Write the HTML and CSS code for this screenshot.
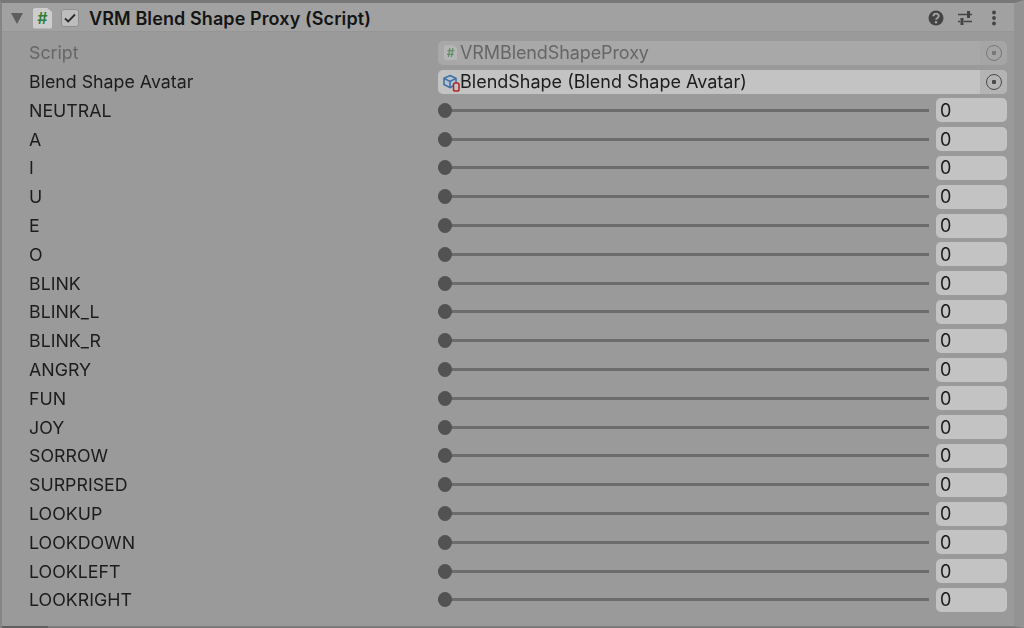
FILE: index.html
```html
<!DOCTYPE html>
<html lang="en">
<head>
    <meta charset="UTF-8">
    <title>VRM Blend Shape Proxy</title>
    <link rel="stylesheet" href="styles.css">
</head>
<body>
    <div class="inspector">
        <header class="header">
            <svg class="foldout" width="12" height="11" viewBox="0 0 12 11"><path d="M0 0h12L6 11z" fill="#5e5e5e"/></svg>
            <span class="script-icon">#</span>
            <span class="toggle">
                <svg width="14" height="12" viewBox="0 0 14 12"><path d="M2 6.5l3.2 3L12 2.5" fill="none" stroke="#2b2b2b" stroke-width="1.8"/></svg>
            </span>
            <h1 class="title">VRM Blend Shape Proxy (Script)</h1>
            <div class="tools">
                <svg width="16" height="16" viewBox="0 0 16 16"><circle cx="8" cy="8" r="7.5" fill="#444"/><path d="M5.4 6.2c0-3.4 5.3-3.4 5.3-.2 0 2-2.6 2-2.6 3.8" fill="none" stroke="#a3a3a3" stroke-width="1.9"/><circle cx="8" cy="12.2" r="1.2" fill="#a3a3a3"/></svg>
                <svg class="tool-sliders" width="16" height="16" viewBox="0 0 16 16"><path d="M1 4.5h9M13 4.5h2M1 11.5h2M7 11.5h8" stroke="#444" stroke-width="1.7"/><path d="M11.5 1v7M5 8v7" stroke="#444" stroke-width="3"/></svg>
                <svg class="tool-dots" width="6" height="16" viewBox="0 0 6 16"><circle cx="3" cy="2.5" r="1.9" fill="#444"/><circle cx="3" cy="8" r="1.9" fill="#444"/><circle cx="3" cy="13.5" r="1.9" fill="#444"/></svg>
            </div>
        </header>

        <div class="rows" id="rows">
            <div class="row">
                <span class="label label-off">Script</span>
                <div class="field field-off">
                    <span class="script-icon script-icon-small">#</span>
                    <span class="field-text">VRMBlendShapeProxy</span>
                    <span class="picker"><i></i></span>
                </div>
            </div>
            <div class="row">
                <span class="label">Blend Shape Avatar</span>
                <div class="field">
                    <svg class="asset-icon" width="17" height="18" viewBox="0 0 17 18">
                        <path d="M7 1.5l6 2.8v6.2L7 13.6 1 10.5V4.3z" fill="#b4c2cf" stroke="#3a6ea5" stroke-width="1.5"/>
                        <path d="M1 4.3l6 3.1 6-3.1M7 7.4v6.2" fill="none" stroke="#3a6ea5" stroke-width="1.5"/>
                        <rect x="10.5" y="9" width="5.5" height="8" rx="1.8" fill="#c3c3c3" stroke="#b02a2a" stroke-width="1.6"/>
                    </svg>
                    <span class="field-text">BlendShape (Blend Shape Avatar)</span>
                    <span class="picker"><i></i></span>
                </div>
            </div>
        </div>
        <div class="scroll-stub"></div>
    </div>

    <script>
        // one slider row per blend shape
        const names = ['NEUTRAL', 'A', 'I', 'U', 'E', 'O', 'BLINK', 'BLINK_L', 'BLINK_R', 'ANGRY',
            'FUN', 'JOY', 'SORROW', 'SURPRISED', 'LOOKUP', 'LOOKDOWN', 'LOOKLEFT', 'LOOKRIGHT'];
        const rows = document.getElementById('rows');
        names.forEach(function(name) {
            const row = document.createElement('div');
            row.className = 'row';
            row.innerHTML = '<span class="label">' + name + '</span>' +
                '<div class="slider"><div class="track"><span class="knob"></span></div>' +
                '<span class="number">0</span></div>';
            rows.appendChild(row);
        });
    </script>
</body>
</html>
```

FILE: styles.css
```css
* {
    margin: 0;
    padding: 0;
    box-sizing: border-box;
}

html, body {
    height: 100%;
    overflow: hidden;
}

body {
    font-family: Inter, 'Liberation Sans', sans-serif;
    background: #9a9a9a;
    color: #1c1c1c;
}

.inspector {
    position: relative;
    height: 628px;
    border-top: 3px solid #777;
    border-left: 2px solid #858585;
    border-right: 10px solid #939393;
    border-bottom: 2px solid #7c7c7c;
    filter: blur(0.45px);
}

.header {
    display: flex;
    align-items: center;
    height: 29px;
    padding-left: 9px;
    padding-top: 2px;
    background: #a1a1a1;
    border-bottom: 1px solid #969696;
}

.foldout {
    margin-right: 10px;
}

.script-icon {
    display: flex;
    align-items: center;
    justify-content: center;
    width: 19px;
    height: 21px;
    margin-right: 9px;
    background: #cdcdcd;
    clip-path: polygon(0 0, 72% 0, 100% 22%, 100% 100%, 0 100%);
    border-radius: 2px;
    color: #2f7d3a;
    font-size: 16px;
    font-weight: 600;
}

.toggle {
    display: flex;
    align-items: center;
    justify-content: center;
    width: 18px;
    height: 18px;
    margin-right: 10px;
    background: #bdbdbd;
    border: 1px solid #8e8e8e;
    border-radius: 3px;
}

.title {
    font-size: 18px;
    font-weight: 600;
    letter-spacing: 0.1px;
    color: #141414;
}

.tools {
    display: flex;
    align-items: center;
    margin-left: auto;
    margin-right: 17px;
}

.tool-sliders {
    margin: 0 18px 0 13px;
}

.rows {
    padding-top: 6.4px;
}

.row {
    display: flex;
    align-items: center;
    height: 28.8px;
    padding-left: 27px;
}

.label {
    width: 409px;
    font-size: 17.8px;
}

.label-off {
    color: #666;
}

.field {
    display: flex;
    align-items: center;
    width: 569px;
    height: 24px;
    background: #c3c3c3;
    border-radius: 5px;
    font-size: 18px;
}

.field-off {
    background: #a8a8a8;
    color: #666;
}

.script-icon-small {
    flex: none;
    width: 13px;
    height: 15px;
    margin: 0 3px 0 6px;
    background: #b6b6b6;
    color: #5f8f66;
    font-size: 12px;
}

.asset-icon {
    flex: none;
    margin: 2px 0 0 5px;
}

.field-text {
    flex: 1;
}

.field-off .field-text {
    letter-spacing: -0.1px;
}

.picker {
    display: flex;
    align-items: center;
    justify-content: center;
    width: 27px;
    height: 24px;
    background: #b4b4b4;
    border-radius: 0 5px 5px 0;
}

.field-off .picker {
    background: #a5a5a5;
}

.picker i {
    display: block;
    width: 16px;
    height: 16px;
    border: 1.5px solid #4a4a4a;
    border-radius: 50%;
    background: radial-gradient(circle, #4a4a4a 0 2px, transparent 2.5px);
}

.field-off .picker i {
    opacity: 0.5;
}

.slider {
    display: flex;
    align-items: center;
    width: 569px;
}

.track {
    position: relative;
    flex: 1;
    height: 3px;
    margin-right: 7px;
    background: #6c6c6c;
}

.knob {
    position: absolute;
    left: 0;
    top: -6px;
    width: 14px;
    height: 15px;
    border-radius: 50%;
    background: #525252;
}

.number {
    display: flex;
    align-items: center;
    width: 71px;
    height: 24px;
    padding-left: 4px;
    background: #c3c3c3;
    border-radius: 5px;
    font-size: 18px;
}

.scroll-stub {
    position: absolute;
    left: 0;
    bottom: -2px;
    width: 46px;
    height: 2px;
    background: #5f5f5f;
}
```
